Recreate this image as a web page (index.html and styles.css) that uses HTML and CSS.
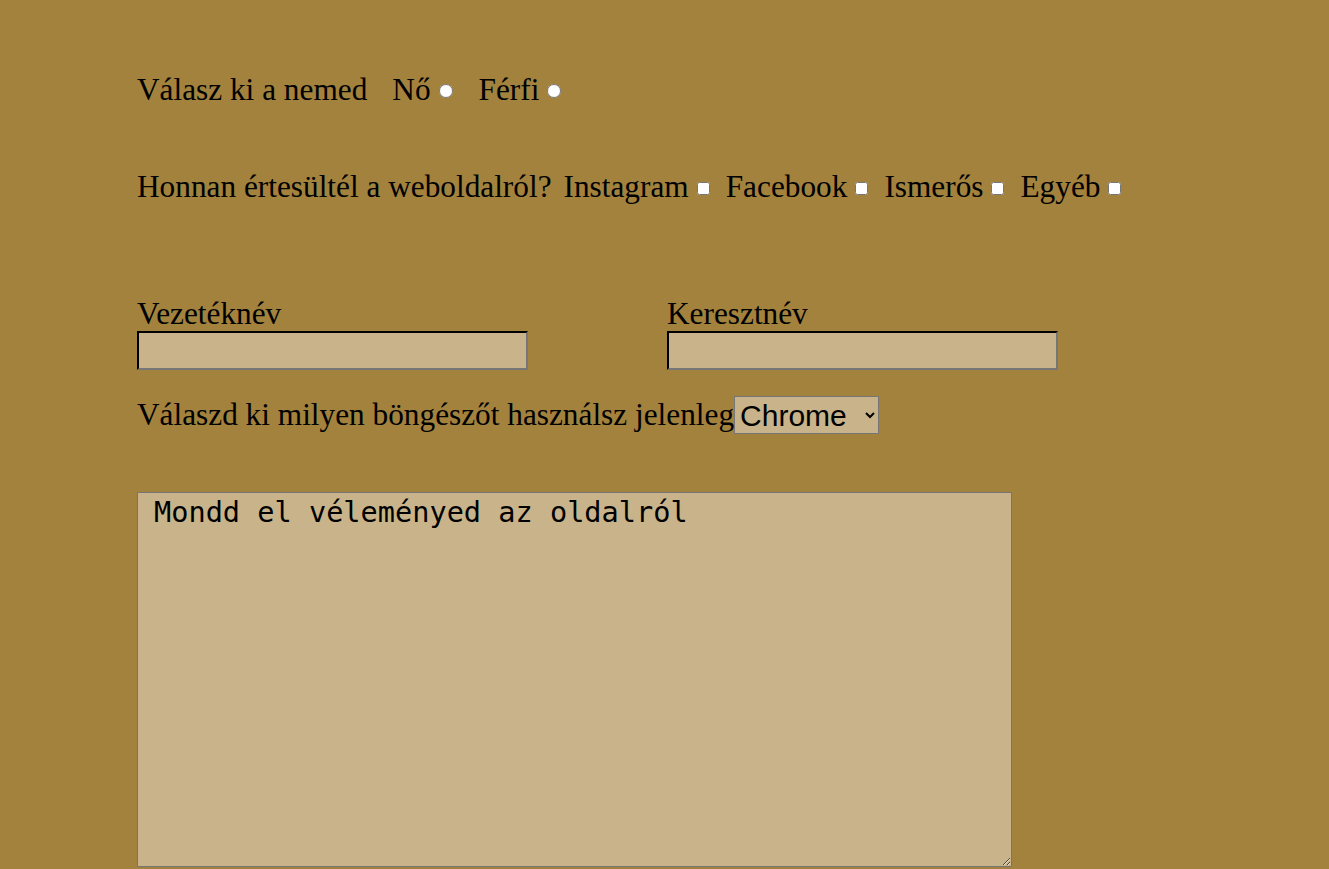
FILE: index.html
```html
<!DOCTYPE html>
<html lang="hu">
<head>
<meta charset="utf-8">
<title>Űrlap</title>
<link rel="stylesheet" href="styles.css">
</head>
<body>
<form class="form">
  <div class="row row-gender">
    <span class="q">Válasz ki a nemed</span>
    <label class="opt">Nő<input type="radio" name="nem" class="radio"></label>
    <label class="opt">Férfi<input type="radio" name="nem" class="radio"></label>
  </div>
  <div class="row row-source">
    <span class="q">Honnan értesültél a weboldalról?</span>
    <label class="opt">Instagram<input type="checkbox" class="check"></label>
    <label class="opt">Facebook<input type="checkbox" class="check"></label>
    <label class="opt">Ismerős<input type="checkbox" class="check"></label>
    <label class="opt">Egyéb<input type="checkbox" class="check"></label>
  </div>
  <div class="names">
    <div class="field">
      <label class="field-label">Vezetéknév</label>
      <input type="text" class="text-input">
    </div>
    <div class="field">
      <label class="field-label">Keresztnév</label>
      <input type="text" class="text-input">
    </div>
  </div>
  <div class="row row-browser">
    <span class="q">Válaszd ki milyen böngészőt használsz jelenleg</span><select class="select"><option>Chrome</option><option>Firefox</option><option>Edge</option></select>
  </div>
  <textarea class="opinion">Mondd el véleményed az oldalról</textarea>
</form>
</body>
</html>
```
FILE: styles.css
```css
html, body {
  margin: 0;
  padding: 0;
  background: #a3823d;
  height: 100%;
  overflow: hidden;
}
body {
  font-family: "Liberation Serif", "Times New Roman", serif;
  font-size: 31.3px;
  color: #000;
}
.form {
  padding: 70px 0 0 137px;
}
.row {
  display: flex;
  align-items: center;
  height: 40px;
}
.row-source {
  margin-top: 57px;
}
.row-gender .q {
  margin-right: 25px;
}
.row-gender .opt {
  margin-right: 26px;
}
.row-source .q {
  margin-right: 12px;
}
.row-source .opt {
  margin-right: 16px;
}
.opt {
  display: flex;
  align-items: center;
}
.radio {
  margin: 2px 0 0 8px;
  width: 14px;
  height: 14px;
}
.check {
  margin: 2px 0 0 8px;
  width: 13px;
  height: 13px;
}
.names {
  display: flex;
  gap: 139px;
  margin-top: 90px;
}
.field {
  display: flex;
  flex-direction: column;
}
.field-label {
  line-height: 34px;
}
.text-input {
  width: 391px;
  height: 39px;
  box-sizing: border-box;
  background: #c8b38a;
  border: 2px inset #767676;
  border-top-color: #222;
  border-left-color: #222;
  margin: 0;
}
.row-browser {
  margin-top: 25px;
}
.row-browser .q {
  margin-right: 0;
}
.select {
  font-family: "Liberation Sans", Arial, sans-serif;
  font-size: 30px;
  width: 145px;
  height: 38px;
  padding: 0 0 0 1px;
  background: #c8b38a;
  border: 1px solid #767676;
  border-radius: 0;
  color: #000;
}
.opinion {
  display: block;
  margin-top: 57px;
  width: 875px;
  height: 375px;
  box-sizing: border-box;
  background: #c8b38a;
  border: 1px solid #767676;
  font-family: "DejaVu Sans Mono", monospace;
  font-size: 28.6px;
  padding: 2px 16px;
  color: #000;
  resize: both;
}
```
